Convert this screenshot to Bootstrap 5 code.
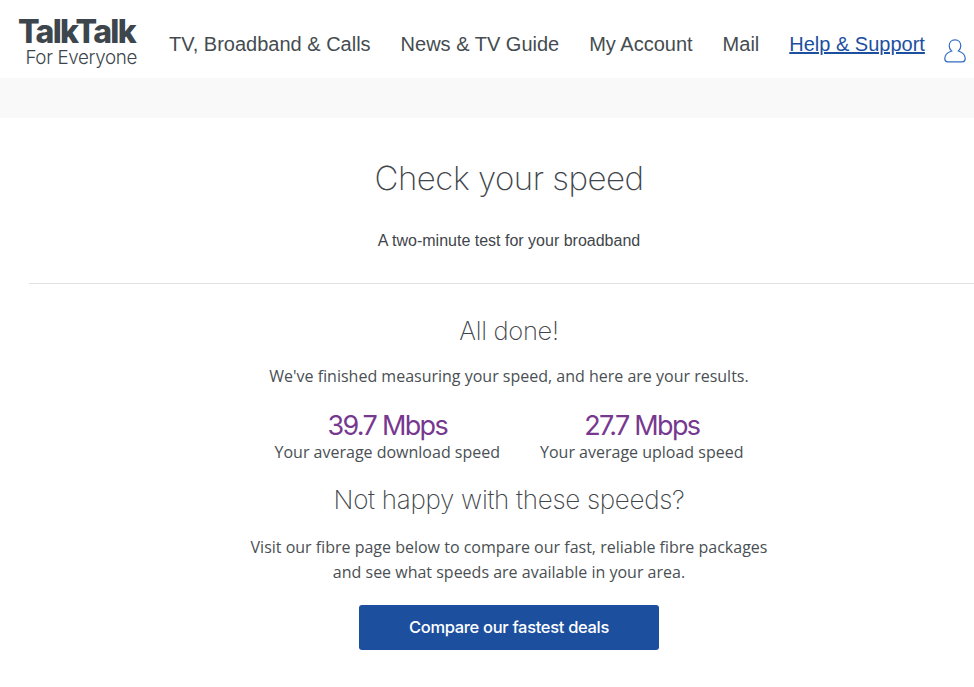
<!DOCTYPE html>
<html lang="en">
<head>
    <meta charset="UTF-8">
    <meta name="viewport" content="width=device-width, initial-scale=1.0">
    <title>Check your speed - TalkTalk</title>
    <link href="https://cdn.jsdelivr.net/npm/bootstrap@5.3.0/dist/css/bootstrap.min.css" rel="stylesheet">
    <style>
        body {
            font-family: "Open Sans", sans-serif;
            color: #4a4f54;
            background-color: #fff;
            overflow-x: hidden;
        }

        .site-header {
            height: 78px;
            padding-left: 18px;
        }

        .brand-logo {
            width: 119px;
            margin-top: 16px;
            color: #3c464c;
            text-decoration: none;
            font-family: Inter, sans-serif;
            text-align: right;
        }

        .brand-name {
            font-size: 32px;
            font-weight: 800;
            line-height: 32px;
            letter-spacing: -1.7px;
            white-space: nowrap;
            text-align: left;
        }

        .brand-sub {
            font-size: 18.8px;
            font-weight: 300;
            line-height: 20px;
            letter-spacing: -0.35px;
            white-space: nowrap;
        }

        .main-menu {
            font-family: "Liberation Sans", Arial, sans-serif;
            font-size: 20px;
            margin-left: 32px;
            margin-top: 31px;
            gap: 30px;
        }

        .main-menu a {
            color: #454c50;
            text-decoration: none;
            line-height: 26px;
            white-space: nowrap;
        }

        .main-menu a.menu-active {
            color: #1d4f9f;
            text-decoration: underline;
        }

        .user-icon {
            margin-left: 19px;
            margin-top: 39px;
        }

        .grey-band {
            height: 40px;
            background-color: #f9f9f9;
        }

        .page-body {
            padding-left: 44px;
        }

        .page-title {
            font-family: Inter, sans-serif;
            font-size: 33px;
            font-weight: 200;
            line-height: 40px;
            letter-spacing: -0.5px;
            color: #3f464b;
            margin: 40px 0 0;
        }

        .page-intro {
            font-family: "Liberation Sans", Arial, sans-serif;
            font-size: 16px;
            line-height: 22px;
            color: #3f464b;
            margin: 32px 0 0;
        }

        .page-rule {
            margin: 31px 0 0 -15px;
            border-top: 1px solid #8a8a8a;
        }

        .sub-title {
            font-family: Inter, sans-serif;
            font-size: 25.5px;
            font-weight: 200;
            line-height: 32px;
            letter-spacing: -0.3px;
            color: #3f464b;
            margin: 0;
        }

        .done-title {
            margin-top: 31px;
        }

        .done-text {
            font-size: 16px;
            line-height: 24px;
            margin: 17px 0 0;
        }

        .speed-row {
            margin-top: 22px;
        }

        .speed-value {
            font-family: Inter, sans-serif;
            font-size: 27px;
            font-weight: 400;
            line-height: 31px;
            letter-spacing: -1.7px;
            color: #77388f;
        }

        .speed-label {
            font-size: 16px;
            line-height: 22px;
        }

        .happy-title {
            margin-top: 21px;
            font-size: 26px;
        }

        .fibre-text {
            font-size: 16px;
            line-height: 25px;
            margin: 19px 0 20px;
        }

        .btn-deals {
            width: 300px;
            height: 45px;
            background-color: #1d4f9f;
            color: #fff;
            font-family: Inter, sans-serif;
            font-size: 16.5px;
            font-weight: 500;
            letter-spacing: -0.32px;
            border: none;
            border-radius: 3px;
        }

        .btn-deals:hover {
            background-color: #173f80;
            color: #fff;
        }
    </style>
</head>
<body>

    <header class="site-header d-flex align-items-start">
        <a class="brand-logo d-block" href="#">
            <div class="brand-name">TalkTalk</div>
            <div class="brand-sub">For Everyone</div>
        </a>
        <nav class="main-menu d-flex">
            <a href="#">TV, Broadband &amp; Calls</a>
            <a href="#">News &amp; TV Guide</a>
            <a href="#">My Account</a>
            <a href="#">Mail</a>
            <a class="menu-active" href="#">Help &amp; Support</a>
        </nav>
        <svg class="user-icon flex-shrink-0" width="22" height="24" viewBox="0 0 22 24" fill="none" stroke="#2f6bc4" stroke-width="1.2">
            <path d="M11 .8C7.300.8 5.200 3.500 5.200 6.800c0 2.200.9 4.100 2.400 5.200C3.900 13.200.8 15.900.8 19.800c0 1.900 1 3 2.900 3h14.600c1.900 0 2.900-1.100 2.900-3 0-3.900-3.100-6.600-6.800-7.800 1.500-1.100 2.400-3 2.400-5.200C16.800 3.500 14.700.8 11 .8z"/>
        </svg>
    </header>

    <div class="grey-band"></div>

    <main class="page-body text-center">
        <h1 class="page-title">Check your speed</h1>
        <p class="page-intro">A two-minute test for your broadband</p>
        <hr class="page-rule">

        <h2 class="sub-title done-title">All done!</h2>
        <p class="done-text">We've finished measuring your speed, and here are your results.</p>

        <div class="d-flex justify-content-center speed-row">
            <div class="me-4 pe-3">
                <div class="speed-value">39.7 Mbps</div>
                <div class="speed-label">Your average download speed</div>
            </div>
            <div>
                <div class="speed-value">27.7 Mbps</div>
                <div class="speed-label">Your average upload speed</div>
            </div>
        </div>

        <h2 class="sub-title happy-title">Not happy with these speeds?</h2>
        <p class="fibre-text">Visit our fibre page below to compare our fast, reliable fibre packages<br>and see what speeds are available in your area.</p>
        <a class="btn btn-deals d-inline-flex align-items-center justify-content-center" href="#">Compare our fastest deals</a>
    </main>

    <script src="https://cdn.jsdelivr.net/npm/bootstrap@5.3.0/dist/js/bootstrap.bundle.min.js"></script>
</body>
</html>
